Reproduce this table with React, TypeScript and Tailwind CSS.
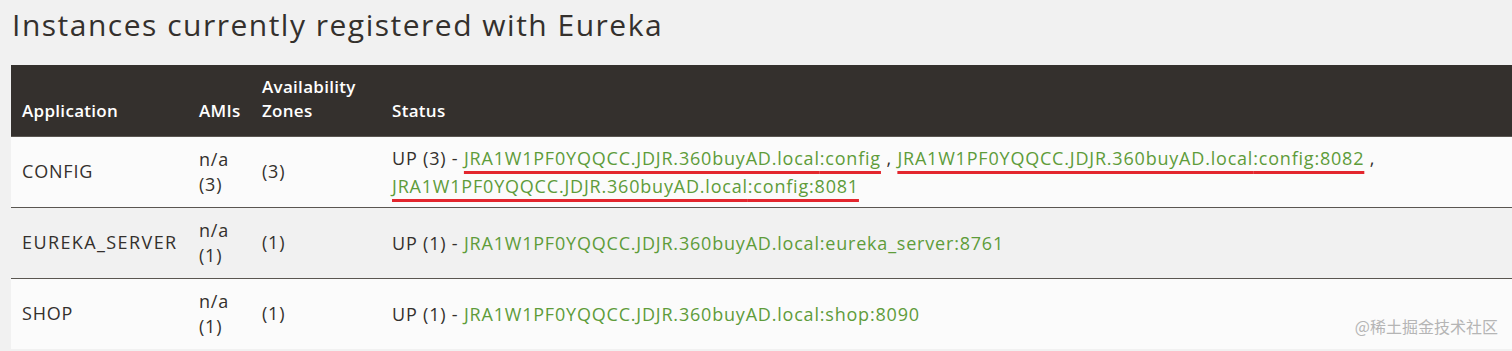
import React from "react";

const HOST = "JRA1W1PF0YQQCC.JDJR.360buyAD.local";

function Link({ children, mark }: { children: React.ReactNode; mark?: boolean }) {
  return (
    <a
      className={
        mark
          ? "text-[#5e9c3a] underline decoration-[#e3262e] decoration-[3px] underline-offset-[6px]"
          : "text-[#5e9c3a]"
      }
    >
      {children}
    </a>
  );
}

function Row({
  app,
  count,
  bg,
  appClass,
  children,
}: {
  app: string;
  count: number;
  bg: string;
  appClass?: string;
  children: React.ReactNode;
}) {
  return (
    <tr className={`${bg} border-t border-[#5a5651] h-[71px]`}>
      <td className={`pl-[11px] pr-2 align-middle ${appClass ?? ""}`}>{app}</td>
      <td className="px-[10px] align-middle leading-[25px]">
        n/a
        <br />({count})
      </td>
      <td className="px-[10px] align-middle">({count})</td>
      <td className="px-[11px] align-middle leading-[28px]">{children}</td>
    </tr>
  );
}

export default function App() {
  return (
    <div
      className="relative bg-[#f1f1f1] w-[1512px] h-[351px] overflow-hidden text-[#34302d]"
      style={{ fontFamily: '"Open Sans", "Liberation Sans", sans-serif' }}
    >
      <h2 className="pl-[12px] pt-[5px] text-[30px] leading-[40px] font-normal tracking-[1.5px]">
        Instances currently registered with Eureka
      </h2>
      <div className="pl-[11px] mt-[20px]">
        <table className="w-full border-collapse text-[18px] tracking-[0.8px]">
          <thead>
            <tr className="bg-[#34302d] text-white h-[71px] text-[17px] tracking-[0.3px]">
              <th className="w-[178px] text-left font-semibold align-bottom pl-[11px] pb-[13px] leading-[24px]">
                Application
              </th>
              <th className="w-[63px] text-left font-semibold align-bottom px-[10px] pb-[13px] leading-[24px]">
                AMIs
              </th>
              <th className="w-[129px] text-left font-semibold align-bottom px-[10px] pb-[13px] leading-[24px]">
                Availability
                <br />
                Zones
              </th>
              <th className="text-left font-semibold align-bottom px-[11px] pb-[13px] leading-[24px]">
                Status
              </th>
            </tr>
          </thead>
          <tbody>
            <Row app="CONFIG" count={3} bg="bg-[#fbfbfb]">
              <b className="font-medium">UP</b> (3) -{" "}
              <Link mark>{HOST}:config</Link> ,{" "}
              <Link mark>{HOST}:config:8082</Link> ,{" "}
              <Link mark>{HOST}:config:8081</Link>
            </Row>
            <Row app="EUREKA_SERVER" count={1} bg="bg-[#f1f1f1]" appClass="tracking-[1.4px]">
              <b className="font-medium">UP</b> (1) - <Link>{HOST}:eureka_server:8761</Link>
            </Row>
            <Row app="SHOP" count={1} bg="bg-[#fbfbfb]">
              <b className="font-medium">UP</b> (1) - <Link>{HOST}:shop:8090</Link>
            </Row>
          </tbody>
        </table>
      </div>
      <div
        className="absolute right-[14px] bottom-[13px] text-[16px] text-[#b5b5b5]"
        style={{ fontFamily: '"Noto Sans CJK SC", sans-serif' }}
      >
        @稀土掘金技术社区
      </div>
    </div>
  );
}
